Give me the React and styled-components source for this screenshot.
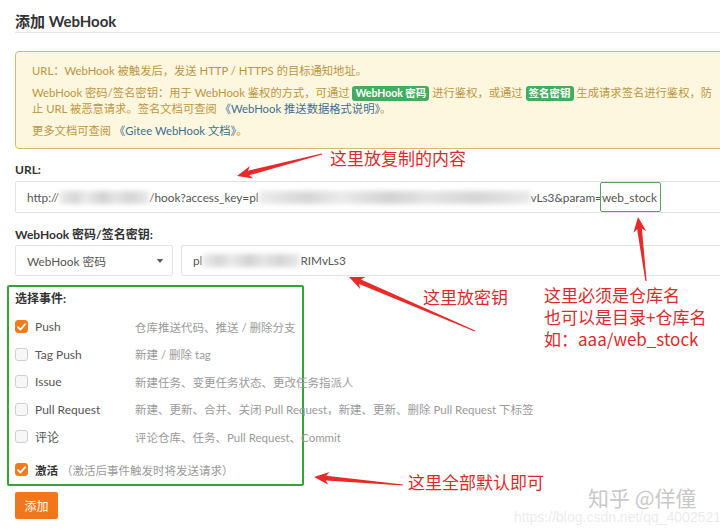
import React from 'react';
import styled, { createGlobalStyle } from 'styled-components';

const GlobalStyle = createGlobalStyle`
  body {
    margin: 0;
    background: #fff;
    font-family: Lato, "Noto Sans CJK SC", sans-serif;
  }
`;

const Page = styled.div`
  position: relative;
  width: 720px;
  height: 532px;
  overflow: hidden;
  padding-left: 15px;
  box-sizing: border-box;
  background: #fff;
  color: #333;
`;

const Title = styled.div`
  padding-top: 10px;
  line-height: 22px;
  font-size: 15px;
  font-weight: 700;
  color: #333;
  border-bottom: 1px solid #e6e6e6;
  margin-right: -20px;
`;

const Notice = styled.div`
  margin-top: 18px;
  margin-right: -30px;
  padding: 11px 16px 9px 16px;
  background: #fef7df;
  border: 1px solid #d6ba72;
  border-radius: 4px;
  color: #bb9642;
  font-size: 11.3px;
`;

const NoticeLine = styled.p`
  margin: ${(p) => p.$gap || 0}px 0 0 0;
  line-height: 16px;
  white-space: nowrap;
`;

const DocLink = styled.span`
  color: #40708f;
`;

const Badge = styled.span`
  display: inline-block;
  padding: 0 3px;
  line-height: 15px;
  border-radius: 3px;
  background: #42ad5f;
  color: #fff;
  font-size: 10.5px;
  font-weight: 700;
`;

const Label = styled.div`
  margin-top: ${(p) => p.$top}px;
  line-height: 16px;
  font-size: 12px;
  font-weight: 700;
  color: #333;
`;

const Field = styled.div`
  display: flex;
  align-items: center;
  height: ${(p) => p.$h || 31}px;
  margin-top: ${(p) => p.$top || 0}px;
  padding: 0 11px;
  border: 1px solid #e3e3e3;
  border-radius: 2px;
  box-sizing: border-box;
  font-size: 11.8px;
  color: #555;
  white-space: nowrap;
  ${(p) => (p.$grow ? 'flex: 1; margin-right: -30px;' : '')}
  ${(p) => (p.$w ? `width: ${p.$w}px; flex: none;` : '')}
`;

const FieldRow = styled.div`
  display: flex;
  gap: 8px;
  margin-top: 2px;
`;

const SelectBox = styled(Field)`
  justify-content: space-between;
  padding-right: 9px;
`;

const Caret = styled.span`
  width: 0;
  height: 0;
  border-left: 3px solid transparent;
  border-right: 3px solid transparent;
  border-top: 4px solid #555;
`;

const Smudge = styled.span`
  display: inline-block;
  flex: none;
  width: ${(p) => p.$w}px;
  height: 13px;
  background: linear-gradient(90deg, #ececec 0%, #d6d6d6 18%, #ebebeb 30%, #d2d2d2 48%, #e4e4e4 62%, #d5d5d5 80%, #eaeaea 100%);
  filter: blur(2.5px);
  vertical-align: middle;
`;

const Marked = styled.span`
  position: relative;
  &::before {
    content: '';
    position: absolute;
    left: -2px;
    right: -4px;
    top: -8px;
    bottom: -7px;
    border: 1px solid #5f9e62;
    border-radius: 2px;
  }
`;

const EventsBox = styled.div`
  width: 297px;
  margin: 9px 0 0 -8px;
  padding: 5px 0 1px 6px;
  border: 2px solid #35a336;
  border-radius: 2px;
  box-sizing: border-box;
`;

const EventsTitle = styled.div`
  line-height: 14px;
  font-size: 12px;
  font-weight: 700;
  color: #333;
  margin-bottom: 7px;
`;

const EventRow = styled.div`
  display: flex;
  align-items: center;
  height: ${(p) => p.$h || 27.5}px;
  margin-top: ${(p) => p.$top || 0}px;
  font-size: 11.5px;
  white-space: nowrap;
`;

const Check = styled.span`
  flex: none;
  display: inline-flex;
  align-items: center;
  justify-content: center;
  width: 13px;
  height: 13px;
  box-sizing: border-box;
  border-radius: 3px;
  margin-right: 7px;
  background: ${(p) => (p.$on ? '#f27c1d' : '#f7f7f7')};
  border: 1px solid ${(p) => (p.$on ? '#f27c1d' : '#cfcfcf')};
`;

const EventName = styled.span`
  flex: none;
  width: 100px;
  color: #555;
  font-size: 12px;
`;

const EventDesc = styled.span`
  flex: none;
  color: #9a9a9a;
`;

const ActiveName = styled.span`
  flex: none;
  color: #333;
  font-weight: 700;
  margin-right: 3px;
`;

const AddButton = styled.button`
  display: block;
  margin-top: 6px;
  width: 43px;
  height: 27px;
  padding: 0;
  border: none;
  border-radius: 2px;
  background: #f5761a;
  color: #fff;
  font-family: inherit;
  font-size: 12px;
`;

const Note = styled.div`
  position: absolute;
  left: ${(p) => p.$x}px;
  top: ${(p) => p.$y}px;
  font-size: 17px;
  line-height: 22px;
  color: #dc2b2b;
  white-space: nowrap;
  font-family: "Noto Sans CJK SC", sans-serif;
`;

const Overlay = styled.svg`
  position: absolute;
  left: 0;
  top: 0;
  pointer-events: none;
`;

const Watermark = styled.div`
  position: absolute;
  left: 588px;
  top: 484px;
  font-size: 21px;
  line-height: 26px;
  color: #c9c9c9;
  font-family: "Noto Sans CJK SC", sans-serif;
  white-space: nowrap;
`;

const WatermarkUrl = styled.div`
  position: absolute;
  left: 514px;
  top: 508px;
  font-size: 14px;
  line-height: 18px;
  color: rgba(210, 210, 210, 0.45);
  font-family: "Liberation Sans", sans-serif;
  white-space: nowrap;
`;

const arrowPoints = (x1, y1, x2, y2) => {
  const dx = x2 - x1;
  const dy = y2 - y1;
  const len = Math.hypot(dx, dy);
  const ux = dx / len;
  const uy = dy / len;
  const px = -uy;
  const py = ux;
  const head = 15;
  const hw = 6.5;
  const bx = x2 - ux * head;
  const by = y2 - uy * head;
  const nx = x2 - ux * (head - 3);
  const ny = y2 - uy * (head - 3);
  const pts = [
    [x1 + px * 0.6, y1 + py * 0.6],
    [nx + px * 2.4, ny + py * 2.4],
    [bx + px * hw, by + py * hw],
    [x2, y2],
    [bx - px * hw, by - py * hw],
    [nx - px * 2.4, ny - py * 2.4],
    [x1 - px * 0.6, y1 - py * 0.6],
  ];
  return pts.map((p) => p.map((v) => v.toFixed(1)).join(',')).join(' ');
};

const arrows = [
  [322, 154, 237, 176],
  [646, 281, 638, 217],
  [475, 331, 349, 277],
  [403, 485, 314, 477],
];

const events = [
  { name: 'Push', desc: '仓库推送代码、推送 / 删除分支', on: true },
  { name: 'Tag Push', desc: '新建 / 删除 tag' },
  { name: 'Issue', desc: '新建任务、变更任务状态、更改任务指派人' },
  { name: 'Pull Request', desc: '新建、更新、合并、关闭 Pull Request，新建、更新、删除 Pull Request 下标签' },
  { name: '评论', desc: '评论仓库、任务、Pull Request、Commit' },
];

function Tick() {
  return (
    <svg width="9" height="8" viewBox="0 0 9 8">
      <path d="M1 4.2 L3.5 6.5 L8 1.3" fill="none" stroke="#fff" strokeWidth="1.8" strokeLinecap="round" strokeLinejoin="round" />
    </svg>
  );
}

export default function App() {
  return (
    <Page>
      <GlobalStyle />
      <Title>添加 WebHook</Title>

      <Notice>
        <NoticeLine>URL：WebHook 被触发后，发送 HTTP / HTTPS 的目标通知地址。</NoticeLine>
        <NoticeLine $gap={6}>
          WebHook 密码/签名密钥：用于 WebHook 鉴权的方式，可通过 <Badge>WebHook 密码</Badge> 进行鉴权，或通过{' '}
          <Badge>签名密钥</Badge> 生成请求签名进行鉴权，防
        </NoticeLine>
        <NoticeLine>
          止 URL 被恶意请求。签名文档可查阅 <DocLink>《WebHook 推送数据格式说明》</DocLink>。
        </NoticeLine>
        <NoticeLine $gap={6}>
          更多文档可查阅 <DocLink>《Gitee WebHook 文档》</DocLink>。
        </NoticeLine>
      </Notice>

      <Label $top={13}>URL:</Label>
      <Field $h={32} $top={3} style={{ marginRight: -30 }}>
        http://<Smudge $w={90} />/hook?access_key=pl<Smudge $w={272} />vLs3&amp;param=<Marked>web_stock</Marked>
      </Field>

      <Label $top={14}>WebHook 密码/签名密钥:</Label>
      <FieldRow>
        <SelectBox $w={158}>
          WebHook 密码
          <Caret />
        </SelectBox>
        <Field $grow>
          pl<Smudge $w={98} />RIMvLs3
        </Field>
      </FieldRow>

      <EventsBox>
        <EventsTitle>选择事件:</EventsTitle>
        {events.map((e) => (
          <EventRow key={e.name}>
            <Check $on={e.on}>{e.on && <Tick />}</Check>
            <EventName>{e.name}</EventName>
            <EventDesc>{e.desc}</EventDesc>
          </EventRow>
        ))}
        <EventRow $h={26} $top={6}>
          <Check $on>
            <Tick />
          </Check>
          <ActiveName>激活</ActiveName>
          <EventDesc>（激活后事件触发时将发送请求）</EventDesc>
        </EventRow>
      </EventsBox>

      <AddButton>添加</AddButton>

      <Overlay width="720" height="532">
        {arrows.map((a, i) => (
          <polygon key={i} points={arrowPoints(...a)} fill="#e82a2a" />
        ))}
      </Overlay>

      <Note $x={330} $y={147}>这里放复制的内容</Note>
      <Note $x={423} $y={286}>这里放密钥</Note>
      <Note $x={544} $y={284}>
        这里必须是仓库名
        <br />
        也可以是目录+仓库名
        <br />
        如：aaa/web_stock
      </Note>
      <Note $x={408} $y={471}>这里全部默认即可</Note>

      <WatermarkUrl>https://blog.csdn.net/qq_40025218</WatermarkUrl>
      <Watermark>知乎 @佯僮</Watermark>
    </Page>
  );
}
